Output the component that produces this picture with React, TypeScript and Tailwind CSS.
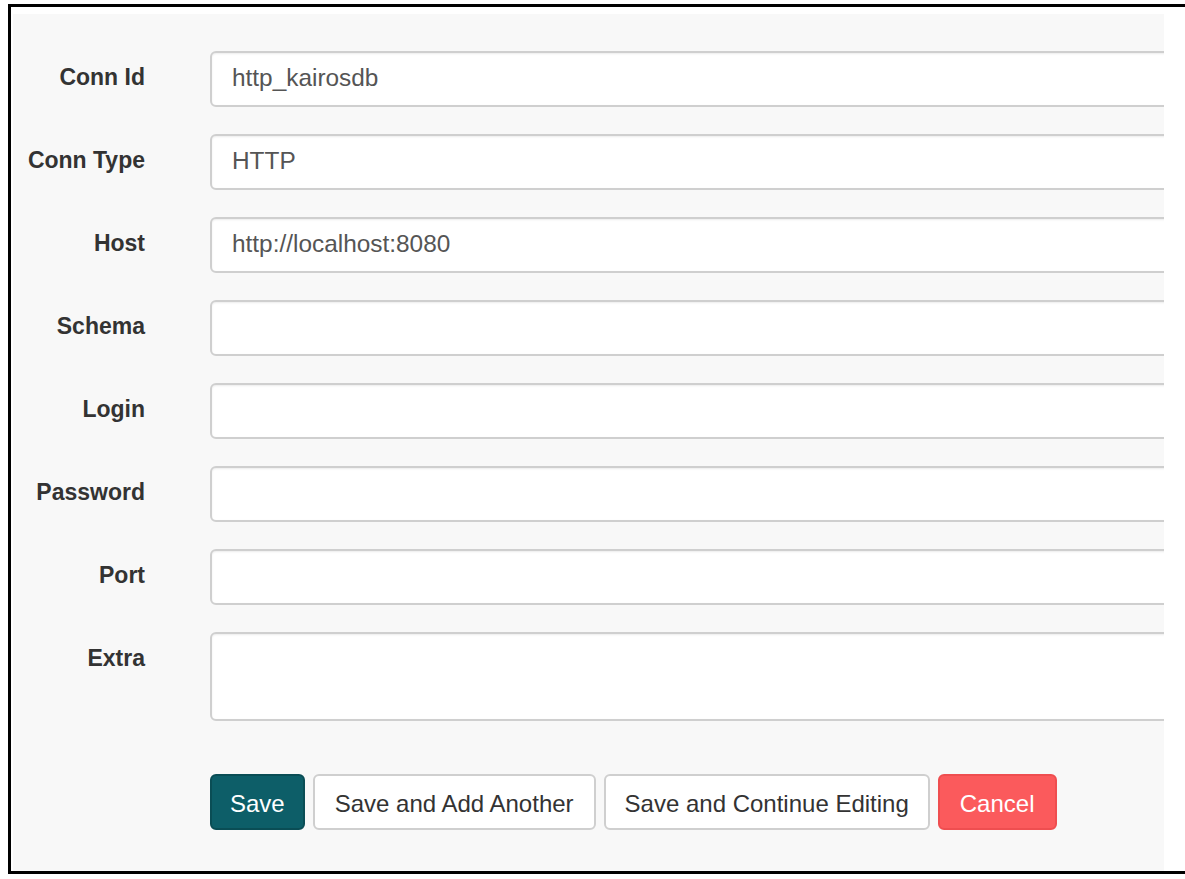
const fields = [
  { label: "Conn Id", value: "http_kairosdb" },
  { label: "Conn Type", value: "HTTP" },
  { label: "Host", value: "http://localhost:8080" },
  { label: "Schema", value: "" },
  { label: "Login", value: "" },
  { label: "Password", value: "" },
  { label: "Port", value: "" },
];

const font = "font-['Liberation_Sans',Arial,sans-serif]";

const FormRow = ({ label, value }: { label: string; value: string }) => (
  <div className="flex items-start">
    <label className="flex h-[53px] w-[132px] shrink-0 items-center justify-end text-[23px] font-bold text-[#333]">
      {label}
    </label>
    <input
      readOnly
      defaultValue={value}
      className={`ml-[65px] h-[56px] w-[1000px] shrink-0 rounded-[6px] border-2 border-[#cfcfcf] bg-white px-[20px] pb-[3px] text-[24.4px] text-[#555] shadow-[inset_0_1px_2px_rgba(0,0,0,0.08)] outline-none ${font}`}
    />
  </div>
);

const App = () => {
  return (
    <div className={`min-h-[879px] bg-white pl-[8px] pt-[4px] ${font}`}>
      <div className="w-[1177px] border-b-[3px] border-l-[3px] border-t-[3px] border-black bg-white pl-[2px] pt-[7px]">
        <div className="flex">
          <div className="w-[1151px] overflow-hidden bg-[#f8f8f8] pb-[41px] pt-[37px]">
            <div className="flex flex-col gap-[27px]">
              {fields.map((f) => (
                <FormRow key={f.label} label={f.label} value={f.value} />
              ))}
              <div className="flex items-start">
                <label className="flex h-[53px] w-[132px] shrink-0 items-center justify-end text-[23px] font-bold text-[#333]">
                  Extra
                </label>
                <textarea
                  readOnly
                  className={`ml-[65px] h-[89px] w-[1000px] shrink-0 resize-none rounded-[6px] border-2 border-[#cfcfcf] bg-white px-[20px] text-[24px] text-[#555] shadow-[inset_0_1px_2px_rgba(0,0,0,0.08)] outline-none ${font}`}
                />
              </div>
            </div>

            <div className="ml-[197px] mt-[53px] flex gap-[8px]">
              <button className="h-[56px] rounded-[6px] border-2 border-[#0a4d55] bg-[#0d5e68] px-[18px] pt-[3px] text-[24px] text-white">
                Save
              </button>
              <button className="h-[56px] rounded-[6px] border-2 border-[#cfcfcf] bg-white px-[20px] pt-[3px] text-[24px] text-[#333]">
                Save and Add Another
              </button>
              <button className="h-[56px] rounded-[6px] border-2 border-[#cfcfcf] bg-white px-[19px] pt-[3px] text-[24px] text-[#333]">
                Save and Continue Editing
              </button>
              <button className="h-[56px] rounded-[6px] border-2 border-[#ef4e50] bg-[#fb5a5c] px-[20px] pt-[3px] text-[24px] text-white">
                Cancel
              </button>
            </div>
          </div>
          <div className="flex-1 bg-white" />
        </div>
      </div>
    </div>
  );
};

export default App;
